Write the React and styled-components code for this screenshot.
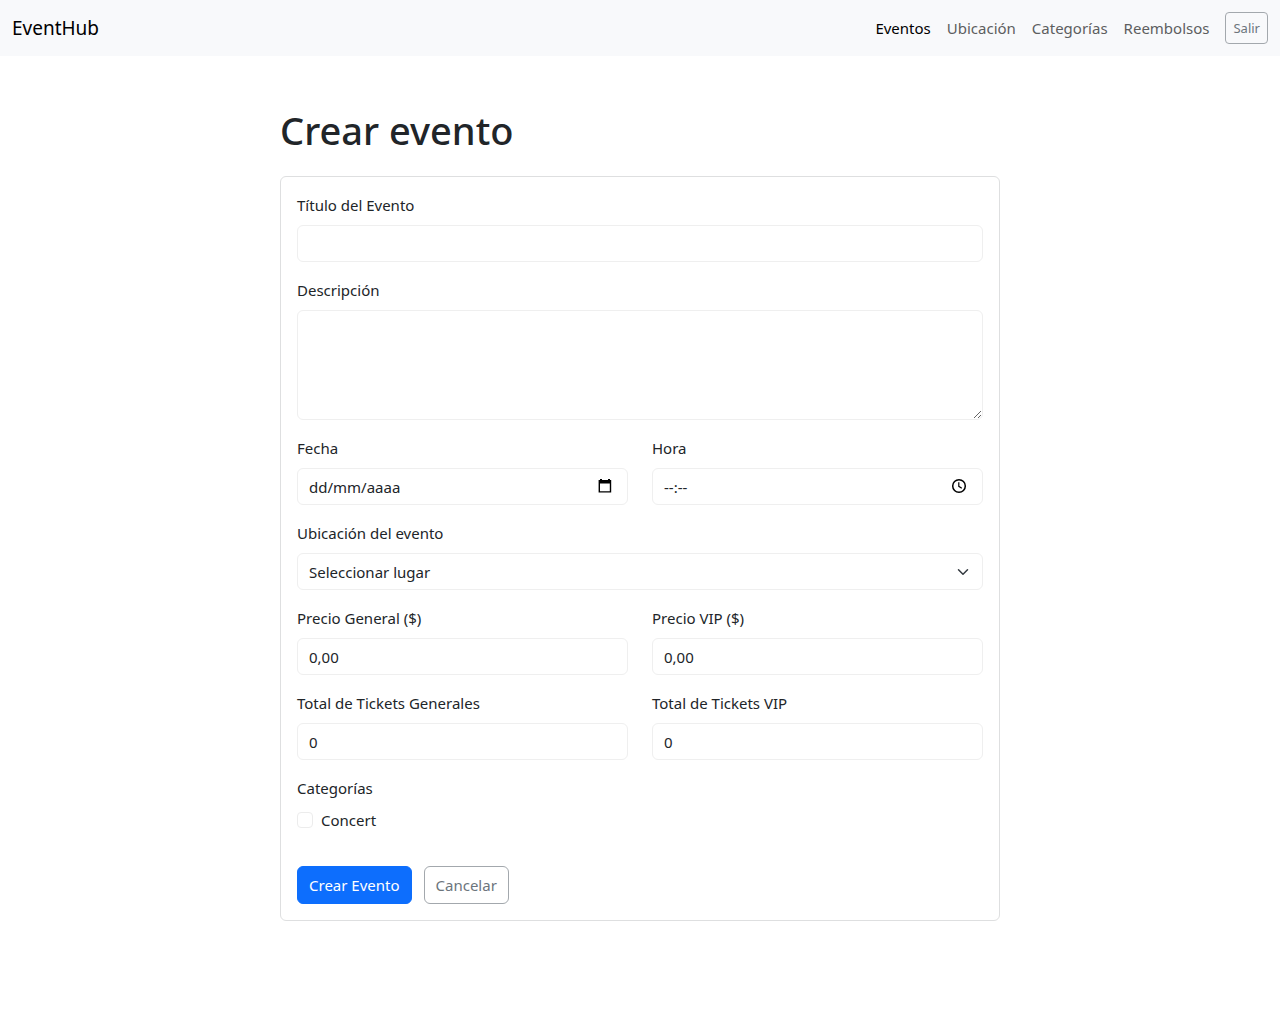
import React from "react";
import styled, { createGlobalStyle, css } from "styled-components";

const GlobalStyle = createGlobalStyle`
  *, *::before, *::after { box-sizing: border-box; }
  body {
    margin: 0;
    background: #fff;
    color: #212529;
    font-family: "Noto Sans", "Open Sans", sans-serif;
    font-size: 15px;
    line-height: 24px;
  }
  input, select, textarea, button { font: inherit; color: inherit; margin: 0; }
`;

const Navbar = styled.nav`
  display: flex;
  align-items: center;
  justify-content: space-between;
  min-height: 56px;
  padding: 8px 12px;
  background: #f8f9fb;
`;

const Brand = styled.a`
  color: #000;
  font-size: 19px;
  line-height: 30px;
  text-decoration: none;
`;

const NavLinks = styled.div`
  display: flex;
  align-items: center;
  gap: 16px;
`;

const NavLink = styled.a`
  color: ${(p) => (p.$active ? "#000" : "#5d5e5f")};
  text-decoration: none;
`;

const Button = styled.button`
  padding: 6px 11px;
  border: 1px solid #a3a8ad;
  border-radius: 6px;
  background: transparent;
  color: #6c757d;
  line-height: 24px;
  cursor: pointer;
  ${(p) =>
    p.$primary &&
    css`
      border-color: #0d6efd;
      background: #0d6efd;
      color: #fff;
    `}
  ${(p) =>
    p.$small &&
    css`
      padding: 4px 7px;
      border-radius: 4px;
      font-size: 13px;
      line-height: 22px;
    `}
`;

const Main = styled.main`
  max-width: 720px;
  margin: 0 auto;
  padding: 50px 0 48px;
`;

const Title = styled.h1`
  margin: 0 0 22px;
  font-size: 38px;
  font-weight: 500;
  line-height: 48px;
`;

const Card = styled.form`
  display: flex;
  flex-direction: column;
  gap: 16px;
  padding: 16px;
  border: 1px solid #dedfe0;
  border-radius: 6px;
`;

const Row = styled.div`
  display: grid;
  grid-template-columns: 1fr 1fr;
  gap: 24px;
`;

const Field = styled.div`
  display: flex;
  flex-direction: column;
  gap: 8px;
`;

const controlFrame = css`
  width: 100%;
  border: 1px solid #efefef;
  border-radius: 6px;
  background-color: #fff;
`;

const Input = styled.input`
  ${controlFrame}
  height: 37px;
  padding: 6px 11px;
`;

const TextArea = styled.textarea`
  ${controlFrame}
  display: block;
  height: 110px;
  padding: 6px 11px;
  resize: vertical;
`;

const PickerFrame = styled.div`
  ${controlFrame}
  display: flex;
  align-items: center;
  height: 37px;
  padding: 0 11px;
`;

const PickerInput = styled.input`
  flex: 1;
  min-width: 0;
  padding: 0;
  border: 0;
  outline: 0;
  background: transparent;
  &::placeholder { color: #212529; opacity: 1; }
`;

const PickerButton = styled.button`
  display: flex;
  padding: 0 4px 2px;
  border: 0;
  background: transparent;
  color: #000;
`;

const SelectFrame = styled.div`
  display: grid;
  align-items: center;
  & > * { grid-area: 1 / 1; }
  & > svg { justify-self: end; margin-right: 14px; pointer-events: none; }
`;

const Select = styled.select`
  ${controlFrame}
  height: 37px;
  padding: 0 36px 0 11px;
  appearance: none;
`;

const Categories = styled.fieldset`
  margin: 0;
  padding: 0;
  border: 0;
`;

const Legend = styled.legend`
  padding: 0;
  margin-bottom: 8px;
`;

const Check = styled.div`
  display: flex;
  align-items: center;
  gap: 8px;
`;

const Checkbox = styled.input`
  appearance: none;
  width: 16px;
  height: 16px;
  border: 1px solid #ececec;
  border-radius: 4px;
  background: #fff;
  &:checked { background: #0d6efd; border-color: #0d6efd; }
`;

const Actions = styled.div`
  display: flex;
  gap: 12px;
  padding-top: 18px;
`;

const CalendarIcon = () => (
  <svg width="14" height="16" viewBox="0 0 14 16" aria-hidden="true">
    <path d="M2 1h2v1h6V1h2v1h1.2v12.6H.6V2H2zM2 5.6v7.6h9.8V5.6z" fill="currentColor" fillRule="evenodd" />
  </svg>
);

const ClockIcon = () => (
  <svg width="16" height="16" viewBox="0 0 16 16" fill="none" stroke="currentColor" aria-hidden="true">
    <circle cx="8" cy="8" r="6.3" strokeWidth="1.5" />
    <path d="M7.8 4.3v4l3 1.9" strokeWidth="1.2" />
  </svg>
);

const ChevronIcon = () => (
  <svg width="12" height="12" viewBox="0 0 16 16" fill="none" aria-hidden="true">
    <path d="m2 5 6 6 6-6" stroke="#343a40" strokeWidth="2" strokeLinecap="round" strokeLinejoin="round" />
  </svg>
);

const links = ["Eventos", "Ubicación", "Categorías", "Reembolsos"];

function TextField({ id, label, ...rest }) {
  return (
    <Field>
      <label htmlFor={id}>{label}</label>
      <Input id={id} {...rest} />
    </Field>
  );
}

function PickerField({ id, label, placeholder, action, icon }) {
  return (
    <Field>
      <label htmlFor={id}>{label}</label>
      <PickerFrame>
        <PickerInput id={id} placeholder={placeholder} />
        <PickerButton type="button" aria-label={action}>{icon}</PickerButton>
      </PickerFrame>
    </Field>
  );
}

export default function App() {
  return (
    <>
      <GlobalStyle />
      <Navbar>
        <Brand href="#">EventHub</Brand>
        <NavLinks>
          {links.map((name, i) => (
            <NavLink key={name} href="#" $active={i === 0}>{name}</NavLink>
          ))}
          <Button type="button" $small>Salir</Button>
        </NavLinks>
      </Navbar>
      <Main>
        <Title>Crear evento</Title>
        <Card onSubmit={(e) => e.preventDefault()}>
          <TextField id="title" label="Título del Evento" />
          <Field>
            <label htmlFor="description">Descripción</label>
            <TextArea id="description" />
          </Field>
          <Row>
            <PickerField id="date" label="Fecha" placeholder="dd/mm/aaaa" action="Elegir fecha" icon={<CalendarIcon />} />
            <PickerField id="time" label="Hora" placeholder="--:--" action="Elegir hora" icon={<ClockIcon />} />
          </Row>
          <Field>
            <label htmlFor="venue">Ubicación del evento</label>
            <SelectFrame>
              <Select id="venue">
                <option>Seleccionar lugar</option>
              </Select>
              <ChevronIcon />
            </SelectFrame>
          </Field>
          <Row>
            <TextField id="price-general" label="Precio General ($)" inputMode="decimal" defaultValue="0,00" />
            <TextField id="price-vip" label="Precio VIP ($)" inputMode="decimal" defaultValue="0,00" />
          </Row>
          <Row>
            <TextField id="tickets-general" label="Total de Tickets Generales" inputMode="numeric" defaultValue="0" />
            <TextField id="tickets-vip" label="Total de Tickets VIP" inputMode="numeric" defaultValue="0" />
          </Row>
          <Categories>
            <Legend>Categorías</Legend>
            <Check>
              <Checkbox type="checkbox" id="concert" />
              <label htmlFor="concert">Concert</label>
            </Check>
          </Categories>
          <Actions>
            <Button type="submit" $primary>Crear Evento</Button>
            <Button type="button">Cancelar</Button>
          </Actions>
        </Card>
      </Main>
    </>
  );
}
